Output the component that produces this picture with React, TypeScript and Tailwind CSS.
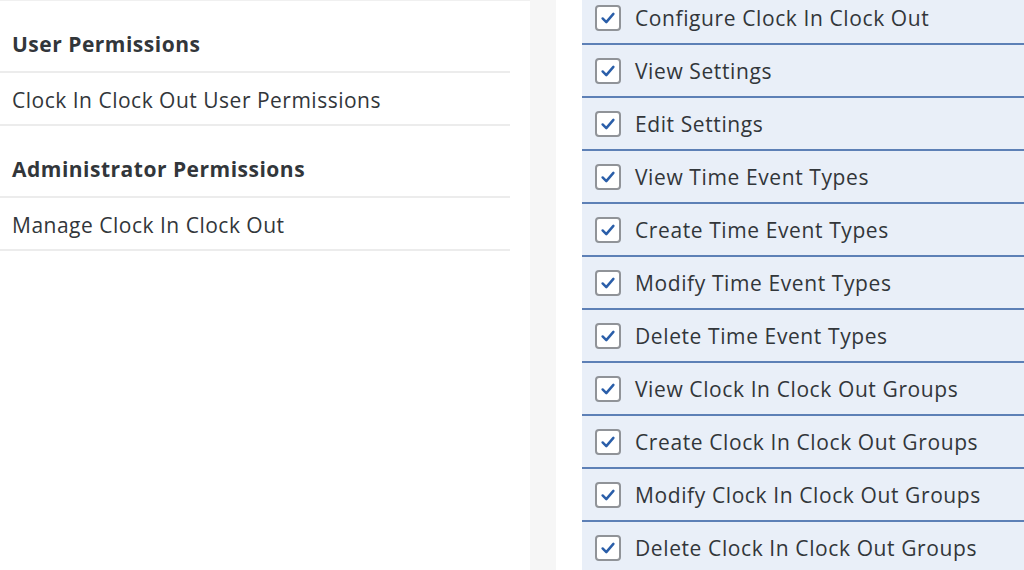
import React from "react";

const userGroups = [
  { title: "User Permissions", items: ["Clock In Clock Out User Permissions"] },
  { title: "Administrator Permissions", items: ["Manage Clock In Clock Out"] },
];

const permissions = [
  "Configure Clock In Clock Out",
  "View Settings",
  "Edit Settings",
  "View Time Event Types",
  "Create Time Event Types",
  "Modify Time Event Types",
  "Delete Time Event Types",
  "View Clock In Clock Out Groups",
  "Create Clock In Clock Out Groups",
  "Modify Clock In Clock Out Groups",
  "Delete Clock In Clock Out Groups",
];

function CheckBox() {
  return (
    <span className="flex h-[26px] w-[26px] shrink-0 items-center justify-center rounded-[4px] border-2 border-[#909398] bg-white">
      <svg viewBox="0 0 16 16" className="h-[18px] w-[18px]" fill="none">
        <path d="M3.2 8.4 6.5 11.7 12.8 4.3" stroke="#2a5ea9" strokeWidth="2.2" strokeLinecap="round" strokeLinejoin="round" />
      </svg>
    </span>
  );
}

export default function App() {
  return (
    <div className="flex h-[570px] w-[1024px] overflow-hidden bg-white text-[#32363a]" style={{ fontFamily: '"Open Sans", "Noto Sans", sans-serif' }}>
      {/* Permission groups */}
      <div className="w-[530px] shrink-0 border-t border-[#f0f0f0]">
        <div className="w-[510px]">
          {userGroups.map((group) => (
            <div key={group.title}>
              <div className="flex h-[72px] items-end border-b-2 border-[#ececec] pb-[11px] pl-[12px] text-[21px] font-bold tracking-[0.5px]">
                {group.title}
              </div>
              {group.items.map((item) => (
                <div key={item} className="flex h-[53px] items-center border-b-2 border-[#ececec] pl-[12px] pt-[5px] text-[21px] tracking-[0.5px]">
                  {item}
                </div>
              ))}
            </div>
          ))}
        </div>
      </div>

      {/* Divider strip */}
      <div className="w-[26px] shrink-0 bg-[#f6f6f6]" />
      <div className="w-[26px] shrink-0 bg-white" />

      {/* Permission list */}
      <div className="flex-1 bg-[#e9eff8]">
        <div className="-mt-[8px]">
          {permissions.map((p) => (
            <div key={p} className="flex h-[53px] items-center gap-[14px] border-b-2 border-[#5d80b6] pl-[13px] text-[21px] tracking-[0.6px]">
              <CheckBox />
              <span className="pt-[2px]">{p}</span>
            </div>
          ))}
        </div>
      </div>
    </div>
  );
}
